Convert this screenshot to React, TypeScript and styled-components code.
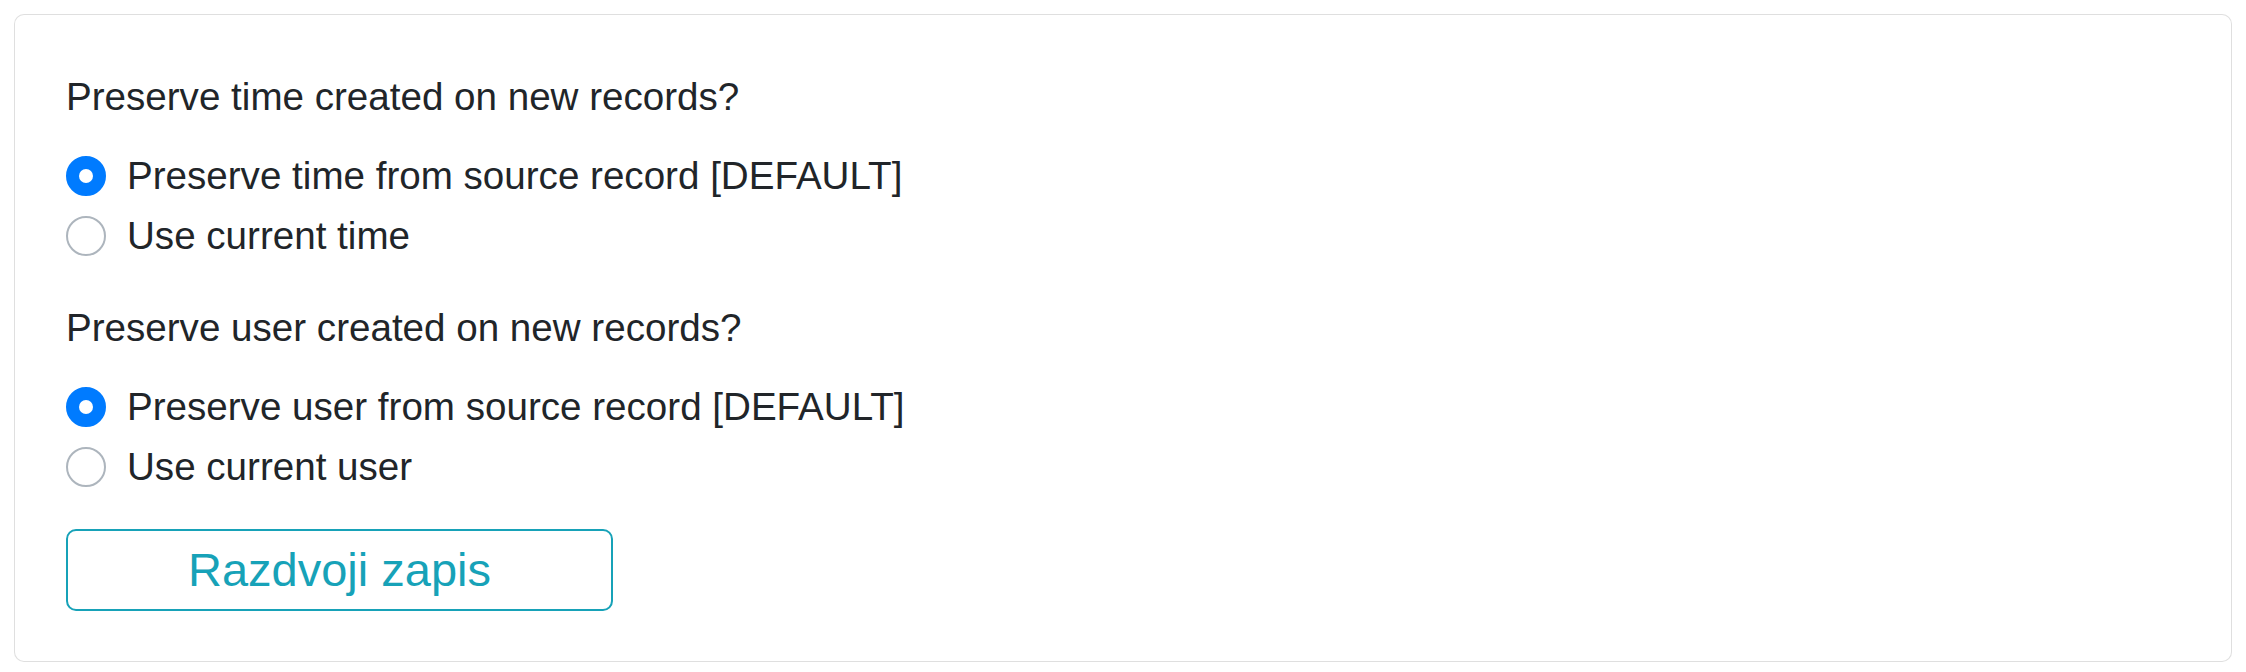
import * as React from "react"
import { useState } from "react"
import styled, { createGlobalStyle } from "styled-components"

const GlobalStyle = createGlobalStyle`
  html, body {
    margin: 0;
    padding: 0;
    background: #fff;
  }

  body {
    font-family: "Liberation Sans", Arial, sans-serif;
    color: #212529;
  }
`

const Page = styled.div`
  padding: 14px;
`

const Card = styled.div`
  border: 1px solid rgba(0, 0, 0, 0.125);
  border-radius: 10px;
  padding: 52px 51px 50px;
  background: #fff;
`

const Group = styled.div`
  margin-bottom: 32px;
`

const Question = styled.div`
  font-size: 38.6px;
  line-height: 60px;
  margin-bottom: 19px;
`

const Option = styled.label`
  display: flex;
  align-items: center;
  gap: 21px;
  height: 60px;
  font-size: 38.6px;
  line-height: 60px;
  cursor: pointer;
`

const Radio = styled.input.attrs({ type: "radio" })`
  appearance: none;
  margin: 0;
  flex: none;
  width: 40px;
  height: 40px;
  border-radius: 50%;
  box-sizing: border-box;
  border: 2px solid #adb5bd;
  background: #fff;
  position: relative;

  &:checked {
    border-color: #007bff;
    background: #007bff;
  }

  &:checked::after {
    content: "";
    position: absolute;
    top: 50%;
    left: 50%;
    width: 14px;
    height: 14px;
    margin: -7px 0 0 -7px;
    border-radius: 50%;
    background: #fff;
  }
`

const SplitButton = styled.button`
  display: block;
  width: 547px;
  height: 82px;
  margin-top: 1px;
  border: 2px solid #17a2b8;
  border-radius: 10px;
  background: transparent;
  color: #17a2b8;
  font-family: "Liberation Sans", Arial, sans-serif;
  font-size: 47px;
  line-height: 60px;
  padding: 0;
  cursor: pointer;
`

type Choice = {
    value: string
    label: string
}

type RadioGroupProps = {
    name: string
    question: string
    choices: Choice[]
    value: string
    onChange: (value: string) => void
}

const RadioGroup = ({ name, question, choices, value, onChange }: RadioGroupProps) => (
    <Group>
        <Question>{question}</Question>
        {choices.map(choice => (
            <Option key={choice.value}>
                <Radio
                    name={name}
                    value={choice.value}
                    checked={value === choice.value}
                    onChange={() => onChange(choice.value)}
                />
                {choice.label}
            </Option>
        ))}
    </Group>
)

export default function App() {
    const [time, setTime] = useState("source")
    const [user, setUser] = useState("source")

    return (
        <Page>
            <GlobalStyle />
            <Card>
                <RadioGroup
                    name="preserve_time"
                    question="Preserve time created on new records?"
                    choices={[
                        { value: "source", label: "Preserve time from source record [DEFAULT]" },
                        { value: "current", label: "Use current time" },
                    ]}
                    value={time}
                    onChange={setTime}
                />
                <RadioGroup
                    name="preserve_user"
                    question="Preserve user created on new records?"
                    choices={[
                        { value: "source", label: "Preserve user from source record [DEFAULT]" },
                        { value: "current", label: "Use current user" },
                    ]}
                    value={user}
                    onChange={setUser}
                />
                <SplitButton type="button">Razdvoji zapis</SplitButton>
            </Card>
        </Page>
    )
}
